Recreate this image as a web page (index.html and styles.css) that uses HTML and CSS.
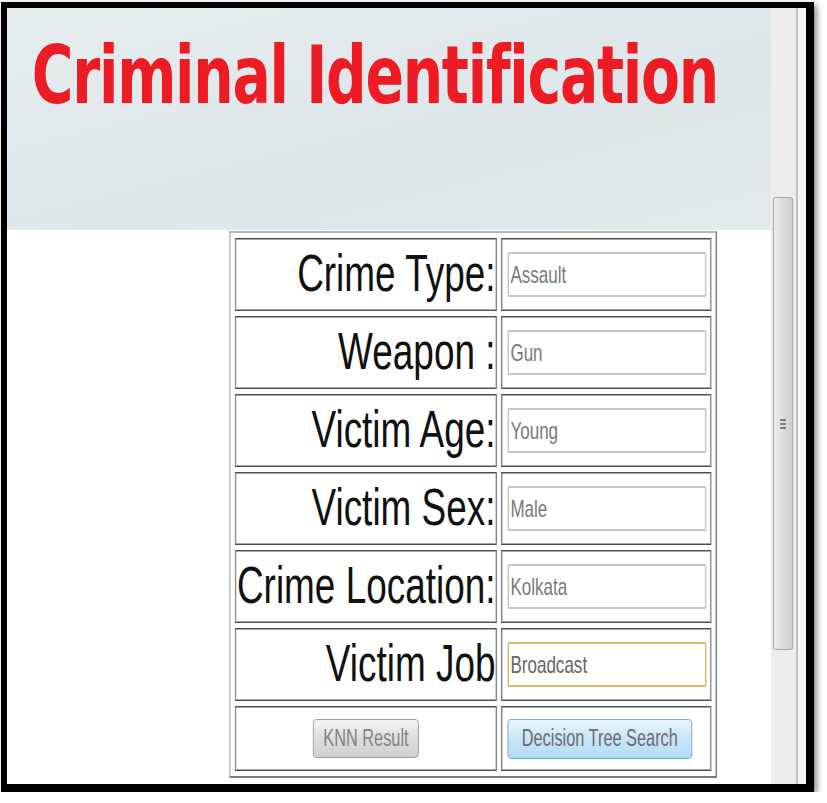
FILE: index.html
```html
<!DOCTYPE html>
<html lang="en">
<head>
    <meta charset="UTF-8">
    <meta name="viewport" content="width=device-width, initial-scale=1.0">
    <title>Criminal Identification</title>
    <link rel="stylesheet" href="styles.css">
</head>
<body>
    <div class="frame">
        <div class="screen">
            <div class="page">
                <div class="header">
                    <h1>Criminal Identification</h1>
                </div>
                <form id="search-form">
                    <table class="search-table">
                        <tr>
                            <td class="label"><span>Crime Type:</span></td>
                            <td class="field"><input type="text" id="crime-type" value="Assault"></td>
                        </tr>
                        <tr>
                            <td class="label"><span>Weapon :</span></td>
                            <td class="field"><input type="text" id="weapon" value="Gun"></td>
                        </tr>
                        <tr>
                            <td class="label"><span>Victim Age:</span></td>
                            <td class="field"><input type="text" id="victim-age" value="Young"></td>
                        </tr>
                        <tr>
                            <td class="label"><span>Victim Sex:</span></td>
                            <td class="field"><input type="text" id="victim-sex" value="Male"></td>
                        </tr>
                        <tr>
                            <td class="label"><span>Crime Location:</span></td>
                            <td class="field"><input type="text" id="crime-location" value="Kolkata"></td>
                        </tr>
                        <tr>
                            <td class="label"><span>Victim Job</span></td>
                            <td class="field"><input type="text" id="victim-job" class="active" value="Broadcast"></td>
                        </tr>
                        <tr class="buttons">
                            <td class="center"><button type="button" class="btn">KNN Result</button></td>
                            <td class="field"><button type="submit" class="btn btn-blue">Decision Tree Search</button></td>
                        </tr>
                    </table>
                </form>
            </div>
            <div class="scrollbar">
                <div class="thumb">
                    <div class="grip"><i></i><i></i><i></i></div>
                </div>
            </div>
        </div>
    </div>
</body>
</html>
```

FILE: styles.css
```css
body {
    margin: 0;
    background-color: #fff;
    font-family: "Liberation Sans", Arial, sans-serif;
}
.frame {
    margin: 2px 0 0 1px;
    width: 799px;
    height: 776px;
    border-style: solid;
    border-color: #000;
    border-width: 6px 8px 8px 6px;
    box-shadow: 3px 3px 6px rgba(0, 0, 0, 0.45);
    background-color: #fff;
    overflow: hidden;
}
/* the screenshot is squeezed sideways, so the whole screen is scaled */
.screen {
    width: 1125px;
    height: 776px;
    display: flex;
    transform: scaleX(0.71);
    transform-origin: 0 0;
}
.page {
    flex: 1;
}
.header {
    height: 222px;
    background: linear-gradient(170deg, #e6edef, #dde6e9 60%, #e2eaec);
}
.header h1 {
    margin: 0;
    padding: 21px 0 0 35px;
    font-family: "DejaVu Sans", Verdana, sans-serif;
    font-weight: bold;
    font-size: 80px;
    letter-spacing: -1.8px;
    color: #ec1b24;
}
.search-table {
    margin: 1px 0 0 313px;
    border-collapse: separate;
    border-spacing: 6px 5px;
    border: 2px solid;
    border-color: #b4b4b4 #7c7c7c #7c7c7c #b4b4b4;
    table-layout: fixed;
}
.search-table td {
    height: 71px;
    padding: 0;
    border: 1px solid #4f4f4f;
    box-shadow: inset 0 0 0 1px #a5a5a5;
    vertical-align: middle;
}
.search-table .buttons td {
    height: 63px;
}
.label {
    width: 367px;
}
.label span {
    display: flex;
    justify-content: flex-end;
    white-space: nowrap;
    padding: 0 1px 4px 0;
    font-size: 52px;
    color: #111;
}
.field {
    width: 286px;
    padding-left: 8px !important;
}
.center {
    text-align: center;
}
.field input {
    box-sizing: border-box;
    width: 280px;
    height: 45px;
    padding: 0 2px;
    border: 2px solid #c6c6c6;
    border-radius: 2px;
    font-family: "Liberation Sans", Arial, sans-serif;
    font-size: 24px;
    color: #7a7a7a;
    background-color: #fff;
}
.field input.active {
    border-color: #e3b364;
    color: #666;
}
.btn {
    height: 39px;
    padding: 0 13px;
    border: 1px solid #8f8f8f;
    border-radius: 5px;
    background: linear-gradient(#f4f4f4, #dedede 50%, #cfcfcf);
    font-family: "Liberation Sans", Arial, sans-serif;
    font-size: 23px;
    color: #828282;
    cursor: pointer;
}
.btn-blue {
    height: 40px;
    padding: 0 19px;
    border-color: #5c9bcc;
    background: linear-gradient(#e6f4fd, #c9e6f8 50%, #b3dbf4);
    color: #6c6c6c;
}
.scrollbar {
    width: 49px;
    background: linear-gradient(to right, #ededed 35px, #c2c2c2 35px, #c2c2c2 38px, #f6f6f6 38px);
}
.thumb {
    box-sizing: border-box;
    width: 28px;
    height: 453px;
    margin: 189px 0 0 3px;
    border: 1px solid #9a9a9a;
    border-radius: 3px;
    background: linear-gradient(to right, #ececec, #dadada 60%, #cfcfcf);
    display: flex;
    justify-content: center;
    align-items: center;
}
.grip {
    display: flex;
    flex-direction: column;
    gap: 2px;
}
.grip i {
    display: block;
    width: 8px;
    height: 2px;
    background-color: #777;
}
```
